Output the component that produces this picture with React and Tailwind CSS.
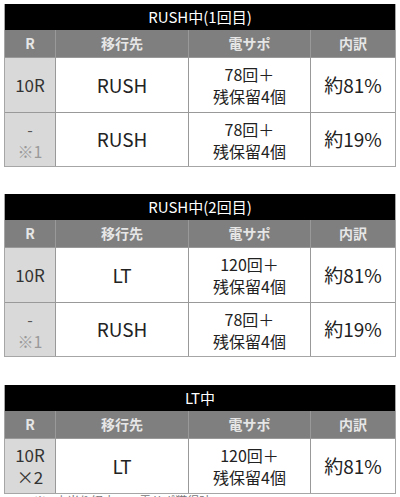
const tables = [
  {
    title: 'RUSH中(1回目)',
    rows: [
      { r: ['10R'], dest: 'RUSH', sapo: ['78回＋', '残保留4個'], rate: '約81%' },
      { r: ['-', '※1'], dest: 'RUSH', sapo: ['78回＋', '残保留4個'], rate: '約19%' },
    ],
  },
  {
    title: 'RUSH中(2回目)',
    rows: [
      { r: ['10R'], dest: 'LT', sapo: ['120回＋', '残保留4個'], rate: '約81%' },
      { r: ['-', '※1'], dest: 'RUSH', sapo: ['78回＋', '残保留4個'], rate: '約19%' },
    ],
  },
  {
    title: 'LT中',
    rows: [{ r: ['10R', '×2'], dest: 'LT', sapo: ['120回＋', '残保留4個'], rate: '約81%' }],
  },
];

const RCell = ({ lines }) => {
  if (lines[0] === '-') {
    return (
      <div className="flex flex-col items-center leading-[22px] text-[16px]">
        <span className="text-[#555]">-</span>
        <span className="text-[#999]">{lines[1]}</span>
      </div>
    );
  }
  return (
    <div className="flex flex-col items-center leading-[22px] text-[17px] text-[#333]">
      {lines.map((l) => (
        <span key={l}>{l}</span>
      ))}
    </div>
  );
};

const Table = ({ title, rows }) => (
  <div className="w-[392px] shrink-0 border-x border-b border-[#a6a6a6]">
    <div className="h-[26px] bg-black text-white text-[15px] flex items-center justify-center">{title}</div>
    <div className="grid grid-cols-[51px_133px_122px_84px] h-[27px] bg-[#7f7f7f] text-[#e6e6e6] text-[14px] font-bold">
      <div className="flex items-center justify-center border-r border-[#999]">R</div>
      <div className="flex items-center justify-center border-r border-[#999]">移行先</div>
      <div className="flex items-center justify-center border-r border-[#999]">電サポ</div>
      <div className="flex items-center justify-center">内訳</div>
    </div>
    {rows.map((row, i) => (
      <div
        key={i}
        className={`grid grid-cols-[51px_133px_122px_84px] border-t border-[#999] text-[#222] ${i === 0 ? 'h-[55px]' : 'h-[54px]'}`}
      >
        <div className="bg-[#d9d9d9] flex items-center justify-center border-r border-[#999]">
          <RCell lines={row.r} />
        </div>
        <div className="bg-white flex items-center justify-center border-r border-[#999] text-[19px]">{row.dest}</div>
        <div className="bg-white flex flex-col items-center justify-center border-r border-[#999] text-[16px] leading-[22px]">
          {row.sapo.map((s) => (
            <span key={s}>{s}</span>
          ))}
        </div>
        <div className="bg-white flex items-center justify-center text-[19px]">{row.rate}</div>
      </div>
    ))}
  </div>
);

export default function App() {
  return (
    <div
      className="w-[400px] h-[497px] overflow-hidden bg-white pt-[4px] pl-[4px]"
      style={{ fontFamily: '"Noto Sans CJK JP", "Noto Sans", sans-serif' }}
    >
      <Table {...tables[0]} />
      <div className="h-[27px]" />
      <Table {...tables[1]} />
      <div className="h-[28px]" />
      <Table {...tables[2]} />
      <div className="pl-[30px] text-[12px] text-[#777] leading-[14px]">※1 小当り経由での電サポ獲得時</div>
    </div>
  );
}
